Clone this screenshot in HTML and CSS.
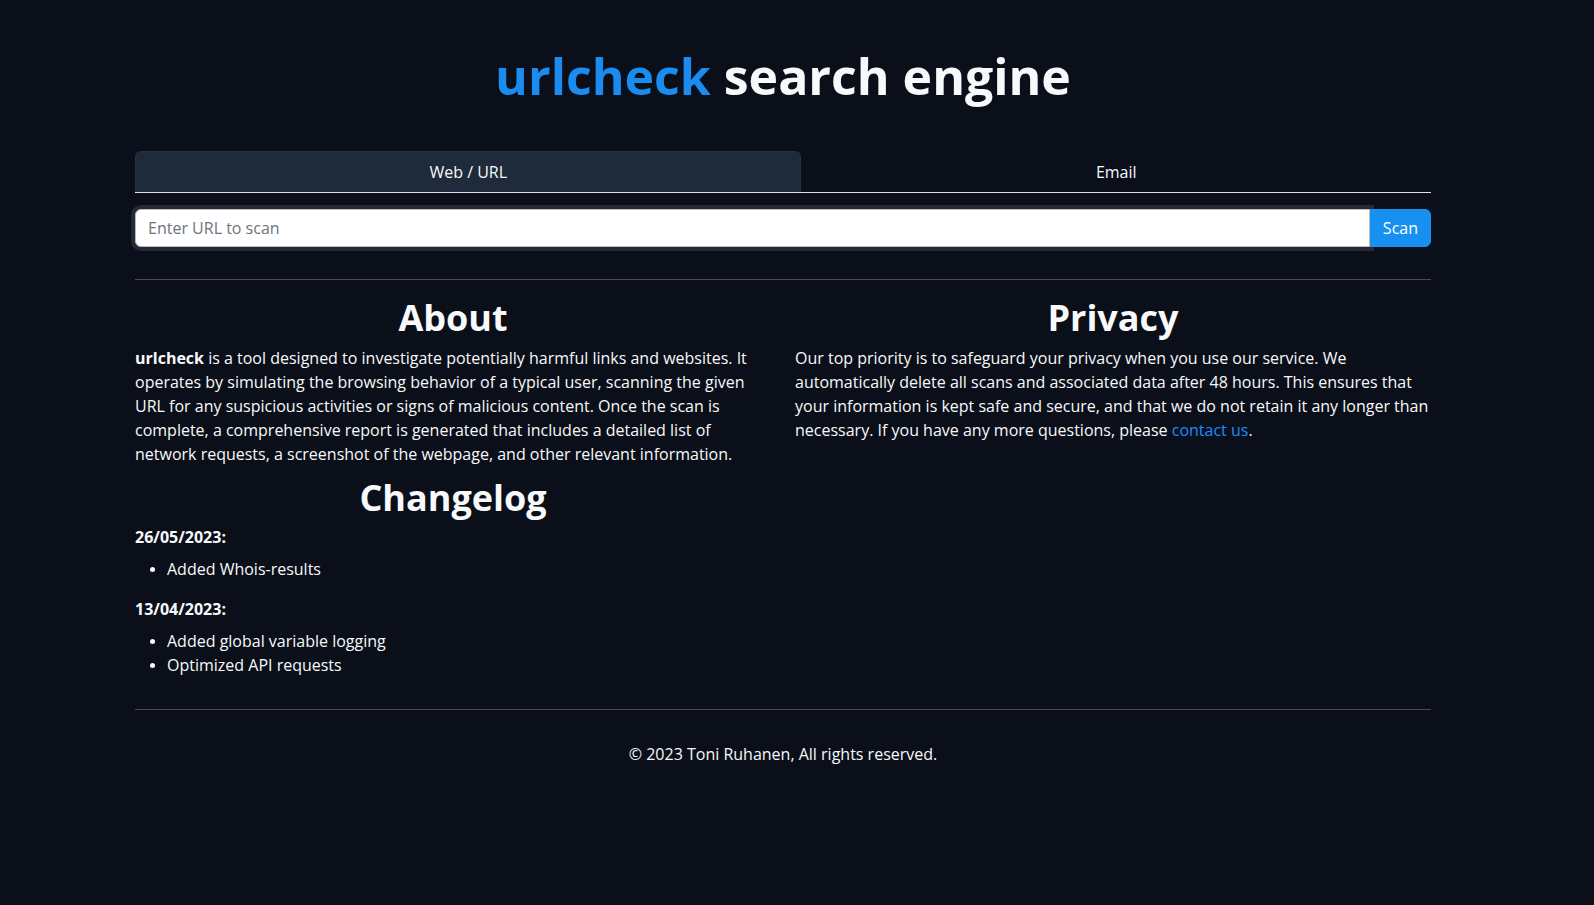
FILE: index.html
```html
<!DOCTYPE html>
<html lang="en">
<head>
<meta charset="utf-8">
<title>urlcheck search engine</title>
<link rel="stylesheet" href="styles.css">
</head>
<body>
<div class="page">
  <div class="container">
    <h1 class="title"><span class="brand">urlcheck</span> search engine</h1>

    <ul class="tabs">
      <li class="tab active">Web / URL</li>
      <li class="tab">Email</li>
    </ul>

    <form class="scan-form">
      <div class="input-group">
        <input class="url-input" type="text" placeholder="Enter URL to scan">
        <button class="scan-btn" type="button">Scan</button>
      </div>
    </form>

    <hr class="divider">

    <div class="row">
      <div class="col">
        <h2 class="section-title">About</h2>
        <p class="about-text"><strong>urlcheck</strong> is a tool designed to investigate potentially harmful links and websites. It operates by simulating the browsing behavior of a typical user, scanning the given URL for any suspicious activities or signs of malicious content. Once the scan is complete, a comprehensive report is generated that includes a detailed list of network requests, a screenshot of the webpage, and other relevant information.</p>

        <h2 class="section-title changelog-title">Changelog</h2>
        <p class="log-date">26/05/2023:</p>
        <ul class="log-list">
          <li>Added Whois-results</li>
        </ul>
        <p class="log-date">13/04/2023:</p>
        <ul class="log-list">
          <li>Added global variable logging</li>
          <li>Optimized API requests</li>
        </ul>
      </div>
      <div class="col">
        <h2 class="section-title">Privacy</h2>
        <p class="privacy-text">Our top priority is to safeguard your privacy when you use our service. We automatically delete all scans and associated data after 48 hours. This ensures that your information is kept safe and secure, and that we do not retain it any longer than necessary. If you have any more questions, please <a class="link" href="#">contact us</a>.</p>
      </div>
    </div>

    <hr class="divider">

    <footer class="footer">© 2023 Toni Ruhanen, All rights reserved.</footer>
  </div>
</div>
</body>
</html>
```

FILE: styles.css
```css
* {
  box-sizing: border-box;
}

html, body {
  margin: 0;
  padding: 0;
  background: #0b0f19;
}

body {
  font-family: "Open Sans", "Noto Sans", "Liberation Sans", sans-serif;
  font-size: 16px;
  line-height: 24px;
  color: #f8f9fa;
  min-height: 905px;
}

.page {
  width: 1566px;
}

.container {
  width: 1296px;
  margin: 0 auto;
}

.title {
  margin: 46px 0 45px;
  font-size: 50px;
  line-height: 60px;
  font-weight: 700;
  text-align: center;
  color: #f8f9fa;
}

.brand {
  color: #1a8cf0;
}

.tabs {
  display: flex;
  list-style: none;
  margin: 0;
  padding: 0;
  border-bottom: 1px solid #dee2e6;
}

.tab {
  flex: 1 1 auto;
  text-align: center;
  padding: 8px 16px;
  border: 1px solid transparent;
  border-bottom: 0;
  border-radius: 6px 6px 0 0;
  line-height: 24px;
  height: 41px;
  color: #f8f9fa;
}

.tab.active {
  background: #1f2a3b;
  border-color: #262f3e;
}

.scan-form {
  margin: 16px 0 32px;
}

.input-group {
  display: flex;
  height: 38px;
}

.url-input {
  flex: 1 1 auto;
  font-family: inherit;
  font-size: 16px;
  line-height: 24px;
  padding: 6px 12px;
  border: 1px solid #b8bcc2;
  border-radius: 6px 0 0 6px;
  background: #ffffff;
  color: #212529;
  box-shadow: 0 0 0 4px #262a36;
  outline: none;
}

.url-input::placeholder {
  color: #6c757d;
}

.scan-btn {
  flex: 0 0 auto;
  font-family: inherit;
  font-size: 16px;
  line-height: 24px;
  padding: 6px 12px;
  border: 1px solid #1890f0;
  border-radius: 0 6px 6px 0;
  background: #1890f0;
  color: #ffffff;
  position: relative;
  z-index: 1;
}

.divider {
  margin: 16px 0;
  border: 0;
  border-top: 1px solid rgba(255, 255, 255, 0.25);
  height: 0;
}

.row {
  display: flex;
  gap: 24px;
}

.col {
  flex: 1 1 0;
  min-width: 0;
}

.section-title {
  margin: 0 0 7px;
  font-size: 36px;
  line-height: 43px;
  font-weight: 700;
  text-align: center;
}

.changelog-title {
  margin-bottom: 6px;
}

.about-text,
.privacy-text {
  margin: 0 0 10px;
}

.log-date {
  margin: 0 0 8px;
  font-weight: 700;
}

.log-list {
  margin: 0 0 16px;
  padding-left: 32px;
}

.log-list li::marker {
  font-size: 14px;
}

.link {
  color: #1a8cff;
  text-decoration: none;
}

.footer {
  padding-top: 16px;
  text-align: center;
}
```
